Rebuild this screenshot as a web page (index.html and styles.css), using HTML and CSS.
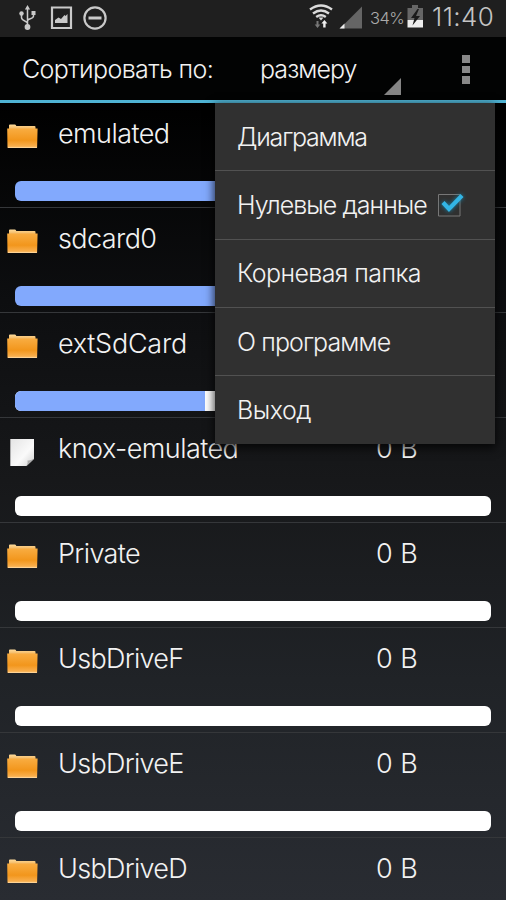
FILE: index.html
```html
<!DOCTYPE html>
<html lang="ru">
<head>
<meta charset="utf-8">
<title>Сортировать по размеру</title>
<link rel="stylesheet" href="styles.css">
</head>
<body>
<svg class="defs" width="0" height="0" aria-hidden="true">
  <defs>
    <linearGradient id="front" x1="0" y1="0" x2="0" y2="1"><stop offset="0" stop-color="#f9ad42"/><stop offset=".6" stop-color="#f2961c"/><stop offset="1" stop-color="#fbb65c"/></linearGradient>
    <linearGradient id="back" x1="0" y1="0" x2="0" y2="1"><stop offset="0" stop-color="#ffdc9c"/><stop offset="1" stop-color="#e58a18"/></linearGradient>
    <linearGradient id="paper" x1="0" y1="0" x2="1" y2="1"><stop offset="0" stop-color="#e4e4e4"/><stop offset=".6" stop-color="#fafafa"/><stop offset="1" stop-color="#d0d0d0"/></linearGradient>
    <symbol id="folder" viewBox="0 0 32 26"><path d="M2 1.300Q2 .5 3 .5h5q1 0 1.300 1.500H27.500q1 0 1 1V10H2z" fill="url(#back)"/><path d="M.2 4.500h30.400l-.5 19q0 .5-1 .5H1.500q-1 0-1-.5z" fill="url(#front)"/><path d="M1 23.400h28.800" stroke="#ffd79c" stroke-width="1"/></symbol>
    <symbol id="file" viewBox="0 0 32 28"><path d="M3.300 0h23.700v20L19.500 27H3.300z" fill="url(#paper)"/><path d="M27 19.500L19.500 27q1.800-2.500 1-5.500 3 .5 6.500-2z" fill="#aaa"/></symbol>
  </defs>
</svg>
<div class="screen">
  <header class="status">
    <svg class="status-left" width="120" height="36" viewBox="0 0 120 36" fill="none" stroke="#c9c9c9">
      <path d="M27.500 8v18M27.500 23.500c0-3-6-2-6-6v-2.500M27.500 21c0-3 6-1.500 6-5v-2" stroke-width="1.500"/>
      <path d="M27.500 5l2.600 4.500h-5.200zM31.500 11h4v4h-4z" fill="#c9c9c9" stroke="none"/>
      <circle cx="21.500" cy="13.500" r="2.200" fill="#c9c9c9" stroke="none"/><circle cx="27.500" cy="27" r="2.900" fill="#c9c9c9" stroke="none"/>
      <path d="M52 7.500h19v20.500H52z" stroke-width="2.200"/><path d="M55 23v-3l3.500-2.500 2.500 1.500 3.500-4 1 1 2-2v9z" fill="#c9c9c9" stroke="none"/>
      <circle cx="95" cy="18" r="10.600" stroke-width="2.200"/><path d="M88.500 18h13" stroke-width="3"/>
    </svg>
    <div class="status-right">
      <svg width="56" height="36" viewBox="306 0 56 36" fill="none">
        <path d="M310 9.500q11-8 22 0M313 13.500q8-6 16 0M316.200 17q4.800-3.500 9.600 0" stroke="#dadada" stroke-width="2.400"/>
        <path d="M318.500 17.500h5l-2.500 3z" fill="#dadada"/>
        <path d="M316.500 21h2v3.500h1.800l-2.800 3.500-2.800-3.500h1.800z" fill="#777"/><path d="M323.200 27.500h2.400v-4h1.800l-3-3.500-3 3.500h1.800z" fill="#eee"/>
        <path d="M362 6.500V28.500H340z" fill="#656565"/><path d="M344.500 23.500v5h-5z" fill="#eee"/>
      </svg>
      <span class="percent">34%</span>
      <svg class="battery" width="17" height="24" viewBox="0 0 17 24"><path d="M5 0h6v3h5v12H.5V3H5z" fill="#666"/><path d="M.5 15H16v7.500H.5z" fill="#ededed"/><path d="M10.500 4L4 13h3.500L5.500 20.500 13 11H9l3-7z" fill="#1b1b1b"/></svg>
      <span class="clock">11:40</span>
    </div>
  </header>
  <nav class="toolbar">
    <span class="sort-label">Сортировать по:</span>
    <div class="spinner"><span class="sort-value">размеру</span><svg class="corner" width="17" height="17" viewBox="0 0 17 17"><path d="M17 0v17H0z" fill="#858585"/></svg></div>
    <div class="more"><i></i><i></i><i></i></div>
  </nav>
  <main class="list">
    <section class="row"><div class="head"><svg class="icon"><use href="#folder"/></svg><span class="name n1">emulated</span></div><div class="bar"><div class="fill full"></div></div></section>
    <section class="row"><div class="head"><svg class="icon"><use href="#folder"/></svg><span class="name n2">sdcard0</span></div><div class="bar"><div class="fill full"></div></div></section>
    <section class="row"><div class="head"><svg class="icon"><use href="#folder"/></svg><span class="name n3">extSdCard</span></div><div class="bar"><div class="fill part"></div></div></section>
    <section class="row"><div class="head"><svg class="icon file"><use href="#file"/></svg><span class="name n4">knox-emulated</span><span class="size">0 B</span></div><div class="bar"></div></section>
    <section class="row"><div class="head"><svg class="icon"><use href="#folder"/></svg><span class="name n5">Private</span><span class="size">0 B</span></div><div class="bar"></div></section>
    <section class="row"><div class="head"><svg class="icon"><use href="#folder"/></svg><span class="name">UsbDriveF</span><span class="size">0 B</span></div><div class="bar"></div></section>
    <section class="row"><div class="head"><svg class="icon"><use href="#folder"/></svg><span class="name">UsbDriveE</span><span class="size">0 B</span></div><div class="bar"></div></section>
    <section class="row"><div class="head"><svg class="icon"><use href="#folder"/></svg><span class="name">UsbDriveD</span><span class="size">0 B</span></div></section>
  </main>
  <div class="menu">
    <div class="item m1">Диаграмма</div>
    <div class="item m2">Нулевые данные
      <svg class="check" width="36" height="34" viewBox="0 0 36 34"><path d="M5.500 6.500h21.500v21.500H5.500z" fill="none" stroke="#777" /><path class="tick" d="M10 14.500l6 6.500L29 7.500" fill="none" stroke="#33b5e5" stroke-width="4.200"/></svg>
    </div>
    <div class="item m3">Корневая папка</div>
    <div class="item m4">О программе</div>
    <div class="item m5">Выход</div>
  </div>
</div>
</body>
</html>
```
FILE: styles.css
```css
* { box-sizing: border-box; }
body { margin: 0; background: #000; font-family: Inter, Roboto, "Liberation Sans", sans-serif; font-weight: 300; color: #f2f2f2; }
.defs { display: block; height: 0; }
.screen { position: relative; width: 506px; height: 900px; overflow: hidden; display: flex; flex-direction: column; background: linear-gradient(#000 0, #000 100px, #0d0e10 300px, #17181a 480px, #202327 680px, #292c32 900px); }
.status { height: 37px; flex: none; background: #1f1f1f; display: flex; justify-content: space-between; }
.status-right { display: flex; width: 200px; }
.percent { margin-left: 8px; width: 34px; font-size: 16.500px; line-height: 36px; color: #aaa; letter-spacing: -.6px; }
.battery { margin: 5px 0 0 3px; }
.clock { margin-left: 8px; font-size: 26px; line-height: 34px; color: #c4c4c4; letter-spacing: .4px; }
.toolbar { height: 66px; flex: none; background: #020303; border-bottom: 3px solid #4fb3d4; display: flex; white-space: nowrap; line-height: 64px; font-size: 25px; }
.sort-label { width: 238px; padding-left: 22px; letter-spacing: -.6px; }
.spinner { width: 163px; height: 58px; padding-left: 22px; display: flex; justify-content: space-between; align-items: flex-end; }
.sort-value { height: 58px; letter-spacing: -.95px; }
.corner { display: block; }
.more { margin: 18px 0 0 61px; display: flex; flex-direction: column; gap: 3px; }
.more i { width: 8px; height: 7.500px; background: #888; }
.row { height: 105px; border-bottom: 1px solid #35373a; }
.head { height: 78px; display: flex; white-space: nowrap; }
.icon { width: 32px; height: 26px; margin: 21px 0 0 7px; flex: none; }
.icon.file { height: 28px; }
.name { width: 319px; margin-left: 19px; font-size: 27px; line-height: 62px; letter-spacing: -.7px; }
.size { margin-left: -1px; font-size: 27px; line-height: 62px; }
.n1 { letter-spacing: -.55px; }
.n2 { letter-spacing: -.6px; }
.n3 { letter-spacing: -.25px; }
.n4 { letter-spacing: -.55px; }
.n5 { letter-spacing: -.6px; }
.bar { height: 20px; margin: 0 15px; background: #fff; border-radius: 6px; overflow: hidden; }
.fill { height: 100%; background: #82a9fd; }
.full { width: 100%; }
.part { width: 40%; }
.menu { position: absolute; left: 215px; top: 103px; width: 280px; height: 340.500px; background: #303030; box-shadow: 0 3px 9px 1px rgba(0,0,0,.75); display: flex; flex-direction: column; }
.item { flex: 1; display: flex; align-items: center; padding-left: 22px; font-size: 25px; white-space: nowrap; border-bottom: 1px solid #515151; }
.item:last-child { border-bottom: 0; }
.m1 { letter-spacing: -1.2px; }
.m2 { letter-spacing: -.95px; }
.m3 { letter-spacing: -.6px; }
.m4 { letter-spacing: -.9px; }
.m5 { letter-spacing: -.5px; }
.check { margin-left: auto; margin-right: 26px; }
.tick { filter: drop-shadow(0 0 2px #1685aa); }
```
